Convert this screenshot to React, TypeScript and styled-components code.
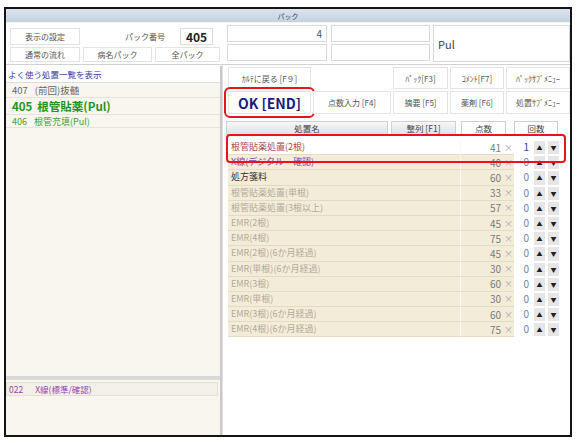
import React from 'react'
import styled, { createGlobalStyle } from 'styled-components'

const GlobalStyle = createGlobalStyle`
	html, body {
		margin: 0;
		padding: 0;
		background: #fff;
	}
	body {
		font-family: 'Noto Sans CJK JP', 'Noto Sans', sans-serif;
		color: #444;
	}
	* {
		box-sizing: border-box;
	}
`

const Window = styled.div`
	margin: 7px 0 0 4px;
	width: 568px;
	height: 430px;
	border: 2px solid #141414;
	display: flex;
	flex-direction: column;
	background: #fff;
`

const TitleBar = styled.div`
	height: 14px;
	line-height: 14px;
	font-size: 7px;
	color: #3a4450;
	text-align: center;
	background: linear-gradient(#dbe4ee, #c4d2e1);
	border-bottom: 1px solid #f4f4f4;
`

const TopSection = styled.div`
	height: 42px;
	display: flex;
	align-items: flex-start;
	padding: 2px 0 0 4px;
	border-bottom: 1px solid #d2d2d2;
`

const TopLeft = styled.div`
	width: 214px;
	margin-top: 3px;
	display: flex;
	flex-direction: column;
	gap: 2px;
`

const TopRow = styled.div`
	display: flex;
	align-items: center;
	gap: 3px;
	height: ${(p: { $h: number }) => p.$h}px;
`

const SmallBtn = styled.div<{ $w: number }>`
	width: ${(p) => p.$w}px;
	height: 100%;
	border: 1px solid #e3e3e3;
	background: #fff;
	font-size: 8px;
	line-height: 13px;
	color: #555;
	display: flex;
	align-items: center;
	justify-content: center;
`

const PackLabel = styled.span`
	margin-left: auto;
	margin-right: 12px;
	font-size: 8px;
	color: #555;
`

const PackNo = styled.div`
	width: 33px;
	height: 17px;
	margin-right: 11px;
	border: 1px solid #dcdcdc;
	font-size: 12px;
	font-weight: bold;
	color: #222;
	display: flex;
	align-items: center;
	justify-content: center;
`

const TopInputs = styled.div`
	margin-left: 3px;
	display: grid;
	grid-template-columns: 100px 99px;
	grid-template-rows: 17px 17px;
	column-gap: 4px;
	row-gap: 2px;
`

const InputBox = styled.div`
	border: 1px solid #d9d9d9;
	font-size: 10px;
	color: #555;
	text-align: right;
	padding-right: 4px;
	line-height: 15px;
`

const PulBox = styled.div`
	margin-left: 3px;
	width: 137px;
	height: 37px;
	border: 1px solid #d9d9d9;
	padding-left: 4px;
	font-size: 11px;
	color: #444;
	display: flex;
	align-items: center;
`

const Main = styled.div`
	flex: 1;
	display: flex;
	min-height: 0;
`

const LeftPanel = styled.div`
	width: 216px;
	margin-top: 1px;
	border-right: 2px solid #c9c9c9;
	display: flex;
	flex-direction: column;
`

const LeftHeader = styled.div`
	height: 17px;
	line-height: 16px;
	padding-left: 2px;
	font-size: 8.5px;
	color: #3c3ca6;
	background: #fff;
	border-bottom: 1px solid #dedede;
`

const FavList = styled.div`
	flex: 1;
	background: #f8f6ee;
	display: flex;
	flex-direction: column;
`

const FavItem = styled.div<{ $h: number; $size: number; $color: string; $bold?: boolean }>`
	height: ${(p) => p.$h}px;
	display: flex;
	align-items: center;
	padding-left: 6px;
	border-bottom: 1px solid #e6e3d7;
	font-size: ${(p) => p.$size}px;
	font-weight: ${(p) => (p.$bold ? 'bold' : 'normal')};
	color: ${(p) => p.$color};
	white-space: nowrap;
`

const FavNo = styled.span<{ $gap: number }>`
	margin-right: ${(p) => p.$gap}px;
`

const LeftBottom = styled.div`
	height: 59px;
	background: #f8f6ee;
	border-top: 4px solid #d9d9d9;
	padding-top: 2px;
`

const BottomItem = styled.div`
	height: 14px;
	display: flex;
	align-items: center;
	padding-left: 2px;
	margin-right: 2px;
	background: #f2f0e7;
	border: 1px solid #e2dfd3;
	font-size: 8.5px;
	color: #9d3fb0;
`

const RightPanel = styled.div`
	flex: 1;
	padding: 2px 0 0 5px;
	border-left: 1px solid #e0e0e0;
	display: flex;
	flex-direction: column;
`

const ButtonGrid = styled.div`
	display: grid;
	grid-template-columns: 83px 78px 55px 54px 64px;
	grid-template-rows: 22px 23px;
	column-gap: 2px;
	row-gap: 2px;
`

const FuncBtn = styled.div`
	border: 1px solid #e4e4e4;
	background: #fff;
	font-size: 8px;
	color: #555;
	display: flex;
	align-items: center;
	justify-content: center;
	white-space: nowrap;
`

const OkBtn = styled(FuncBtn)`
	font-size: 14px;
	font-weight: bold;
	color: #1b1b7c;
	outline: 2.5px solid #e8141c;
	outline-offset: 2.5px;
	border-radius: 2px;
`

const Table = styled.div`
	position: relative;
	margin-top: 7px;
`

const HeaderRow = styled.div`
	height: 14px;
	display: flex;
`

const HeadCell = styled.div<{ $w: number; $ml: number; $plain?: boolean }>`
	width: ${(p) => p.$w}px;
	margin-left: ${(p) => p.$ml}px;
	border: 1px solid #d0d0d0;
	background: ${(p) => (p.$plain ? '#fff' : 'linear-gradient(#f6f6f6, #e3e3e3)')};
	font-size: 8.5px;
	line-height: 12px;
	color: #444;
	text-align: center;
`

const Rows = styled.div`
	margin-top: 5px;
`

const Row = styled.div`
	height: 15.2px;
	display: flex;
	align-items: stretch;
`

const NameCell = styled.div<{ $active?: boolean; $color: string }>`
	width: 232px;
	padding-left: 3px;
	background: ${(p) => (p.$active ? '#fff' : '#f3ecd9')};
	border-bottom: 1px solid #e3dbc6;
	font-size: 9px;
	line-height: 14px;
	color: ${(p) => p.$color};
	white-space: nowrap;
`

const PtsCell = styled.div<{ $active?: boolean }>`
	width: 54px;
	background: ${(p) => (p.$active ? '#fff' : '#f3ecd9')};
	border-left: 1px solid #fbf8f0;
	border-bottom: 1px solid #e3dbc6;
	display: flex;
	align-items: center;
	justify-content: flex-end;
	padding-right: 1px;
	font-size: 10px;
	color: #7a7a7a;
`

const Times = styled.span`
	margin-left: 3px;
	font-size: 9px;
	color: #a8a8a8;
`

const CountBox = styled.div<{ $on?: boolean }>`
	width: 17px;
	margin-left: 1px;
	background: #fff;
	font-size: 10px;
	line-height: 14px;
	text-align: right;
	padding-right: 3px;
	color: ${(p) => (p.$on ? '#2d3a86' : '#6f7fb4')};
`

const ArrowBtn = styled.div<{ $ml: number }>`
	width: 11px;
	margin: 1px 0 1px ${(p) => p.$ml}px;
	background: #e6e6e6;
	font-size: 6px;
	color: #222;
	display: flex;
	align-items: center;
	justify-content: center;
`

const Highlight = styled.div`
	position: absolute;
	left: -2px;
	top: 13px;
	width: 340px;
	height: 29px;
	border: 2.5px solid #e8141c;
	border-radius: 4px;
	pointer-events: none;
`

const GRAY = '#b3aa99'

const items = [
	{ name: '根管貼薬処置(2根)', pts: 41, count: 1, color: '#b04848', active: true },
	{ name: 'X線(デジタル・確認)', pts: 40, count: 0, color: '#8a3cb4' },
	{ name: '処方箋料', pts: 60, count: 0, color: '#333' },
	{ name: '根管貼薬処置(単根)', pts: 33, count: 0, color: GRAY },
	{ name: '根管貼薬処置(3根以上)', pts: 57, count: 0, color: GRAY },
	{ name: 'EMR(2根)', pts: 45, count: 0, color: GRAY },
	{ name: 'EMR(4根)', pts: 75, count: 0, color: GRAY },
	{ name: 'EMR(2根)(6か月経過)', pts: 45, count: 0, color: GRAY },
	{ name: 'EMR(単根)(6か月経過)', pts: 30, count: 0, color: GRAY },
	{ name: 'EMR(3根)', pts: 60, count: 0, color: GRAY },
	{ name: 'EMR(単根)', pts: 30, count: 0, color: GRAY },
	{ name: 'EMR(3根)(6か月経過)', pts: 60, count: 0, color: GRAY },
	{ name: 'EMR(4根)(6か月経過)', pts: 75, count: 0, color: GRAY },
]

const App: React.FC = () => {
	return (
		<>
			<GlobalStyle />
			<Window>
				<TitleBar>パック</TitleBar>
				<TopSection>
					<TopLeft>
						<TopRow $h={17}>
							<SmallBtn $w={70}>表示の設定</SmallBtn>
							<PackLabel>パック番号</PackLabel>
							<PackNo>405</PackNo>
						</TopRow>
						<TopRow $h={15}>
							<SmallBtn $w={70}>通常の流れ</SmallBtn>
							<SmallBtn $w={69}>病名パック</SmallBtn>
							<SmallBtn $w={65}>全パック</SmallBtn>
						</TopRow>
					</TopLeft>
					<TopInputs>
						<InputBox>4</InputBox>
						<InputBox />
						<InputBox />
						<InputBox />
					</TopInputs>
					<PulBox>Pul</PulBox>
				</TopSection>
				<Main>
					<LeftPanel>
						<LeftHeader>よく使う処置一覧を表示</LeftHeader>
						<FavList>
							<FavItem $h={15} $size={9.5} $color="#666">
								<FavNo $gap={7}>407</FavNo>(前回)抜髄
							</FavItem>
							<FavItem $h={17} $size={11.5} $color="#1f951f" $bold>
								<FavNo $gap={5}>405</FavNo>根管貼薬(Pul)
							</FavItem>
							<FavItem $h={13} $size={9} $color="#3ba33b">
								<FavNo $gap={7}>406</FavNo>根管充填(Pul)
							</FavItem>
						</FavList>
						<LeftBottom>
							<BottomItem>
								<FavNo $gap={12}>022</FavNo>X線(標準/確認)
							</BottomItem>
						</LeftBottom>
					</LeftPanel>
					<RightPanel>
						<ButtonGrid>
							<FuncBtn>ｶﾙﾃに戻る [F９]</FuncBtn>
							<div />
							<FuncBtn>ﾊﾟｯｸ[F3]</FuncBtn>
							<FuncBtn>ｺﾒﾝﾄ[F7]</FuncBtn>
							<FuncBtn>ﾊﾟｯｸｻﾌﾞﾒﾆｭｰ</FuncBtn>
							<OkBtn>OK [END]</OkBtn>
							<FuncBtn>点数入力 [F4]</FuncBtn>
							<FuncBtn>摘要 [F5]</FuncBtn>
							<FuncBtn>薬剤 [F6]</FuncBtn>
							<FuncBtn>処置ｻﾌﾞﾒﾆｭｰ</FuncBtn>
						</ButtonGrid>
						<Table>
							<HeaderRow>
								<HeadCell $w={162} $ml={-2}>処置名</HeadCell>
								<HeadCell $w={65} $ml={3}>整列 [F1]</HeadCell>
								<HeadCell $w={45} $ml={5} $plain>点数</HeadCell>
								<HeadCell $w={44} $ml={8} $plain>回数</HeadCell>
							</HeaderRow>
							<Rows>
								{items.map((it) => (
									<Row key={it.name}>
										<NameCell $active={it.active} $color={it.color}>
											{it.name}
										</NameCell>
										<PtsCell $active={it.active}>
											{it.pts}
											<Times>×</Times>
										</PtsCell>
										<CountBox $on={it.count > 0}>{it.count}</CountBox>
										<ArrowBtn $ml={2}>▲</ArrowBtn>
										<ArrowBtn $ml={3}>▼</ArrowBtn>
									</Row>
								))}
							</Rows>
							<Highlight />
						</Table>
					</RightPanel>
				</Main>
			</Window>
		</>
	)
}

export default App
